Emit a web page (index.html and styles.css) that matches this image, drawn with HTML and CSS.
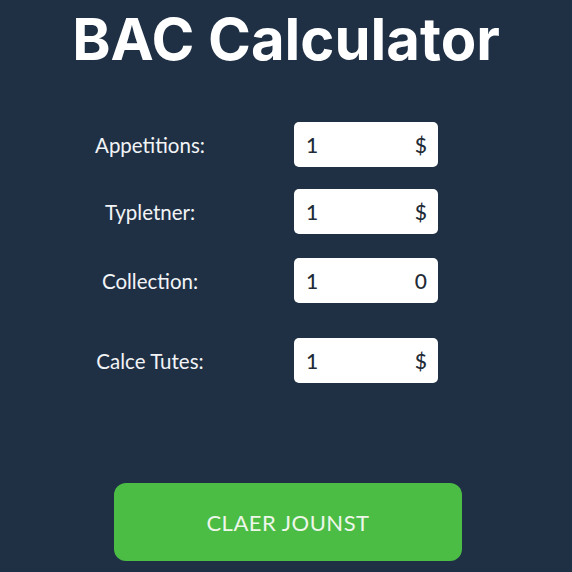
FILE: index.html
```html
<!doctype html>
<html>
<head>
  <meta charset="utf-8">
  <link rel="stylesheet" href="styles.css">
</head>
<body>
  <main class="calc">
    <h1 class="calc-title">BAC Calculator</h1>

    <form class="calc-form">
      <div class="field field-1">
        <label class="field-label" for="appetitions">Appetitions:</label>
        <div class="field-box">
          <span class="field-value" id="appetitions">1</span>
          <span class="field-unit">$</span>
        </div>
      </div>

      <div class="field field-2">
        <label class="field-label" for="typletner">Typletner:</label>
        <div class="field-box">
          <span class="field-value" id="typletner">1</span>
          <span class="field-unit">$</span>
        </div>
      </div>

      <div class="field field-3">
        <label class="field-label" for="collection">Collection:</label>
        <div class="field-box">
          <span class="field-value" id="collection">1</span>
          <span class="field-unit">0</span>
        </div>
      </div>

      <div class="field field-4">
        <label class="field-label" for="calce">Calce Tutes:</label>
        <div class="field-box">
          <span class="field-value" id="calce">1</span>
          <span class="field-unit">$</span>
        </div>
      </div>
    </form>

    <button class="calc-btn" type="button">CLAER JOUNST</button>
  </main>
</body>
</html>
```

FILE: styles.css
```css
html, body {
  height: 100%;
  margin: 0;
}
body {
  background: #1f3045;
  color: #ffffff;
  font-family: "Lato", "Open Sans", sans-serif;
  overflow: hidden;
}
.calc {
  display: flex;
  flex-direction: column;
  align-items: center;
}
.calc-title {
  margin: 4px 0 0;
  font-family: "Inter", sans-serif;
  font-weight: 700;
  font-size: 58px;
  line-height: 70px;
  letter-spacing: 0;
}
.calc-form {
  display: flex;
  flex-direction: column;
  margin: 48px 44px 0 0;
  width: 348px;
}
.field {
  display: flex;
  align-items: center;
  justify-content: space-between;
}
.field-2 { margin-top: 22px; }
.field-3 { margin-top: 24px; }
.field-4 { margin-top: 35px; }
.field-label {
  width: 120px;
  text-align: center;
  font-size: 20.5px;
  color: #f2f4f6;
}
.field-box {
  display: flex;
  align-items: center;
  justify-content: space-between;
  box-sizing: border-box;
  width: 144px;
  height: 45px;
  padding: 0 11px 0 12px;
  background: #ffffff;
  border-radius: 5px;
  color: #1f2b36;
  font-size: 21px;
  font-weight: 500;
}
.calc-btn {
  margin: 100px 0 0 4px;
  width: 348px;
  height: 78px;
  border: 0;
  border-radius: 12px;
  background: #4bbd45;
  color: #eef6ea;
  font-family: "Lato", sans-serif;
  font-size: 22px;
  letter-spacing: 0.5px;
}
```
